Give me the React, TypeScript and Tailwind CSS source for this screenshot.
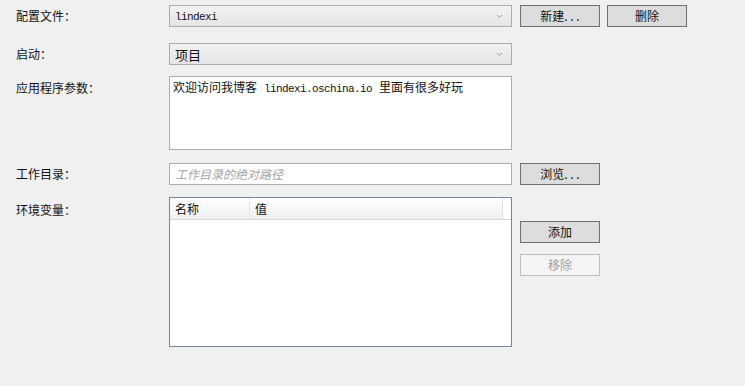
import React from "react";

const font = { fontFamily: '"Microsoft YaHei", "Noto Sans CJK SC", "Noto Sans", sans-serif' };
const mono = { fontFamily: '"Liberation Mono", "DejaVu Sans Mono", monospace' };

function Btn({ children, disabled }: { children: React.ReactNode; disabled?: boolean }) {
  return (
    <div
      className={
        "w-[80px] h-[22px] flex items-center justify-center text-[12px] leading-none border " +
        (disabled ? "border-[#bfbfbf] bg-[#f4f4f4] text-[#a0a0a0]" : "border-[#707070] bg-[#dddddd] text-[#111]")
      }
    >
      {children}
    </div>
  );
}

function Chevron() {
  return (
    <svg width="7" height="5" viewBox="0 0 7 5" className="mr-[8px]">
      <path d="M1 1 L3.5 3.5 L6 1" fill="none" stroke="#9a9a9a" strokeWidth="1" />
    </svg>
  );
}

function Combo({ children }: { children: React.ReactNode }) {
  return (
    <div className="w-[343px] h-[22px] border border-[#acacac] bg-gradient-to-b from-[#f2f2f2] to-[#e5e5e5] flex items-center justify-between pl-[5px]">
      <div className="text-[12px] leading-none text-[#111]">{children}</div>
      <Chevron />
    </div>
  );
}

function Label({ children, className = "" }: { children: React.ReactNode; className?: string }) {
  return <div className={"w-[153px] text-[12px] leading-none text-[#111] " + className}>{children}</div>;
}

export default function App() {
  return (
    <div className="w-[745px] h-[386px] bg-[#f0f0f0] pt-[5px] pl-[16px]" style={font}>
      <div className="flex items-center">
        <Label>配置文件：</Label>
        <Combo>
          <span style={mono} className="text-[11px] tracking-[-0.6px]">lindexi</span>
        </Combo>
        <div className="ml-[8px] flex gap-[7px]">
          <Btn>新建. . .</Btn>
          <Btn>删除</Btn>
        </div>
      </div>

      <div className="flex items-center mt-[16px]">
        <Label>启动：</Label>
        <Combo>
          <span className="text-[13px]">项目</span>
        </Combo>
      </div>

      <div className="flex items-start mt-[11px]">
        <Label className="pt-[6px]">应用程序参数：</Label>
        <div className="w-[343px] h-[74px] border border-[#abadb3] bg-white pl-[3px] pt-[4px] text-[12px] leading-none text-[#111]">
          欢迎访问我博客<span style={mono} className="text-[11px] tracking-[-0.6px] mx-[7px]">lindexi.oschina.io</span>里面有很多好玩
        </div>
      </div>

      <div className="flex items-center mt-[13px]">
        <Label>工作目录：</Label>
        <div className="w-[343px] h-[22px] border border-[#abadb3] bg-white flex items-center pl-[5px]">
          <span className="text-[12px] italic text-[#a6a6a6] leading-none">工作目录的绝对路径</span>
        </div>
        <div className="ml-[8px]">
          <Btn>浏览. . .</Btn>
        </div>
      </div>

      <div className="flex items-start mt-[12px]">
        <Label className="pt-[7px]">环境变量：</Label>
        <div className="w-[343px] h-[150px] border border-[#7189a0] bg-white">
          <div className="flex h-[22px] border-b border-[#d5d5d5] bg-gradient-to-b from-[#ffffff] to-[#f0f0f0] text-[12px] leading-none text-[#111]">
            <div className="w-[80px] flex items-center pl-[5px] border-r border-[#e5e5e5]">名称</div>
            <div className="w-[253px] flex items-center pl-[5px] border-r border-[#e2e2e2]">值</div>
            <div className="flex-1 bg-white"></div>
          </div>
        </div>
        <div className="ml-[8px] mt-[24px] flex flex-col gap-[11px]">
          <Btn>添加</Btn>
          <Btn disabled>移除</Btn>
        </div>
      </div>
    </div>
  );
}
